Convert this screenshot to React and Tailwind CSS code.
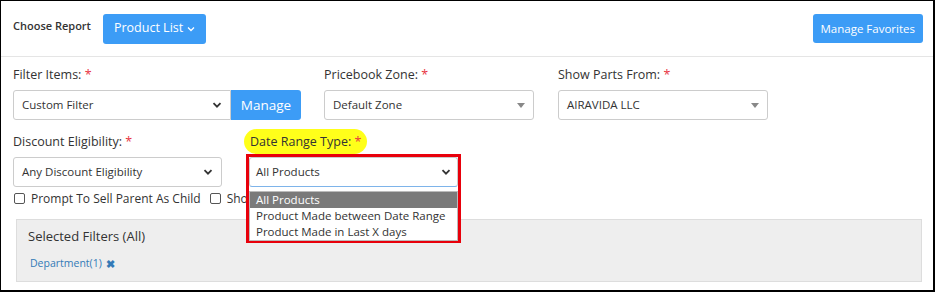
import React from 'react';

const Chevron = () => (
  <svg width="10" height="10" viewBox="0 0 10 10" className="shrink-0">
    <path d="M1.5 3.2 L5 6.7 L8.5 3.2" fill="none" stroke="#333" strokeWidth="1.8" />
  </svg>
);

const Caret = () => (
  <svg width="8" height="5" viewBox="0 0 8 5" className="shrink-0">
    <path d="M0 0 L8 0 L4 5 Z" fill="#888" />
  </svg>
);

const Label = ({ children }) => (
  <div className="text-[12.5px] text-[#333] leading-[16px] h-[16px]">
    {children} <span className="text-[#e8343f]">*</span>
  </div>
);

const NativeSelect = ({ value, className = '' }) => (
  <div className={`h-[30px] flex items-center justify-between pl-[8px] pr-[8px] border border-[#ccc] bg-white text-[11.5px] text-[#333] ${className}`}>
    <span>{value}</span>
    <Chevron />
  </div>
);

const ZoneSelect = ({ value }) => (
  <div className="w-[210px] h-[30px] flex items-center justify-between pl-[8px] pr-[8px] border border-[#ccc] rounded-[3px] bg-white text-[11.5px] text-[#333]">
    <span>{value}</span>
    <Caret />
  </div>
);

const Checkbox = ({ label }) => (
  <label className="flex items-center gap-[6px] text-[12px] leading-[17px] text-[#333] whitespace-nowrap">
    <span className="w-[11px] h-[11px] border border-[#555] rounded-[2px] bg-white" />
    {label}
  </label>
);

export default function App() {
  return (
    <div className="w-[935px] h-[292px] bg-white border-l border-t border-r-2 border-b-2 border-black overflow-hidden" style={{ fontFamily: '"Open Sans", sans-serif' }}>
      <div className="h-[56px] flex items-center justify-between pl-[12px] pr-[10px] border-b border-[#e5e5e5]">
        <div className="flex items-center gap-[12px]">
          <span className="text-[11px] font-semibold text-[#333] -mt-[4px]">Choose Report</span>
          <button className="h-[30px] px-[11px] rounded-[3px] bg-[#3c9cf6] text-white text-[12.5px] flex items-center gap-[4px]">
            Product List
            <svg width="8" height="6" viewBox="0 0 8 6"><path d="M1 1.5 L4 4.5 L7 1.5" fill="none" stroke="white" strokeWidth="1.3" /></svg>
          </button>
        </div>
        <button className="h-[29px] px-[8px] rounded-[3px] bg-[#3c9cf6] text-white text-[11.5px]">Manage Favorites</button>
      </div>

      <div className="pl-[12px] pt-[10px]">
        <div className="flex">
          <div className="w-[311px]">
            <Label>Filter Items:</Label>
            <div className="flex mt-[7px]">
              <NativeSelect value="Custom Filter" className="w-[218px] rounded-l-[3px]" />
              <button className="w-[70px] h-[30px] rounded-r-[3px] bg-[#3c9cf6] text-white text-[13.5px]">Manage</button>
            </div>
          </div>
          <div className="w-[234px]">
            <Label>Pricebook Zone:</Label>
            <div className="mt-[7px]"><ZoneSelect value="Default Zone" /></div>
          </div>
          <div>
            <Label>Show Parts From:</Label>
            <div className="mt-[7px]"><ZoneSelect value="AIRAVIDA LLC" /></div>
          </div>
        </div>

        <div className="flex mt-[14px]">
          <div className="w-[236px]">
            <Label>Discount Eligibility:</Label>
            <NativeSelect value="Any Discount Eligibility" className="w-[209px] rounded-[3px] mt-[7px]" />
          </div>
          <div className="relative">
            <div className="-ml-[5px] -mt-[5px] h-[25px] w-fit flex items-center px-[6px] rounded-full bg-[#ffff1a]">
              <span className="text-[12.5px] leading-[16px] text-[#333]">Date Range Type: <span className="text-[#e8343f]">*</span></span>
            </div>
            <div className="absolute left-[-3px] top-[20px] w-[215px] h-[89px] border-[3px] border-[#e8000b] z-20 bg-white">
              <div className="h-[30px] flex items-center justify-between pl-[6px] pr-[6px] border border-[#ccc] border-b-[#7eb4ea] rounded-[3px] text-[11.5px] text-[#333]">
                <span>All Products</span>
                <Chevron />
              </div>
              <div className="mt-[4px] border border-[#bbb] text-[11.5px] leading-[16px] text-[#333]">
                <div className="bg-[#7a7a7a] text-white pl-[6px]">All Products</div>
                <div className="pl-[6px]">Product Made between Date Range</div>
                <div className="pl-[6px]">Product Made in Last X days</div>
              </div>
            </div>
          </div>
        </div>

        <div className="flex gap-[9px] mt-[3px] ml-[1px]">
          <Checkbox label="Prompt To Sell Parent As Child" />
          <Checkbox label="Show Parts Only" />
        </div>

        <div className="mt-[12px] ml-[3px] w-[906px] h-[63px] bg-[#eeeeee] border border-[#dddddd] pl-[11px] pt-[7px]">
          <div className="text-[13px] leading-[18px] text-[#333]">Selected Filters (All)</div>
          <div className="mt-[11px] ml-[2px] text-[10.5px] leading-[15px] text-[#337ab7] flex items-center gap-[4px]">
            Department(1)
            <span className="font-bold text-[11px]">✖</span>
          </div>
        </div>
      </div>
    </div>
  );
}
